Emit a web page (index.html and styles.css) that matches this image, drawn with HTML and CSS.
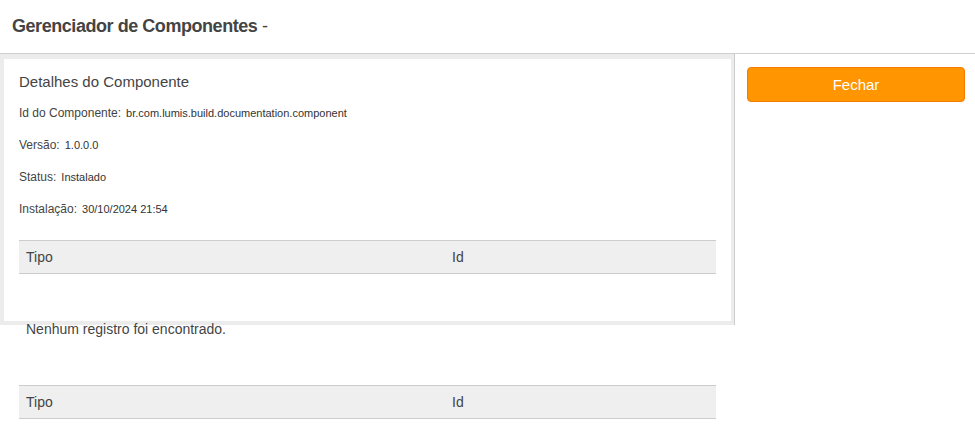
FILE: index.html
```html
<!DOCTYPE html>
<html lang="pt-BR">
<head>
  <meta charset="UTF-8">
  <title>Gerenciador de Componentes</title>
  <link rel="stylesheet" href="styles.css">
</head>
<body>
  <!-- cabeçalho -->
  <div class="header">
    <h1><strong>Gerenciador de Componentes</strong> -</h1>
  </div>

  <div class="main">
    <!-- coluna de detalhes -->
    <div class="content">
      <div class="panel">
        <div class="card">
          <h2>Detalhes do Componente</h2>
          <div class="field"><span class="label">Id do Componente:</span><span class="value">br.com.lumis.build.documentation.component</span></div>
          <div class="field"><span class="label">Versão:</span><span class="value">1.0.0.0</span></div>
          <div class="field"><span class="label">Status:</span><span class="value">Instalado</span></div>
          <div class="field"><span class="label">Instalação:</span><span class="value">30/10/2024 21:54</span></div>

          <table class="grid">
            <thead>
              <tr><th class="col-type">Tipo</th><th>Id</th></tr>
            </thead>
          </table>
          <p class="empty">Nenhum registro foi encontrado.</p>

          <table class="grid">
            <thead>
              <tr><th class="col-type">Tipo</th><th>Id</th></tr>
            </thead>
          </table>
        </div>
      </div>
    </div>

    <!-- coluna de ações -->
    <div class="actions">
      <button class="btn-close">Fechar</button>
    </div>
  </div>
</body>
</html>
```

FILE: styles.css
```css
/* reset */
* { box-sizing: border-box; margin: 0; padding: 0; }
html, body { min-height: 100%; }
body {
  font-family: 'Liberation Sans', Arial, sans-serif;
  background: #fff;
  color: #444;
  min-height: 100vh;
}

/* cabeçalho */
.header {
  height: 54px;
  border-bottom: 1px solid #cfcfcf;
  padding: 15px 12px 0;
}
.header h1 {
  font-size: 18px;
  font-weight: normal;
  line-height: 22px;
  color: #444;
  letter-spacing: -0.45px;
}
.header h1 strong { font-weight: bold; }

/* layout principal */
.main { display: flex; }
.content {
  width: 735px;
  height: 271px;
  border-right: 1px solid #ccc;
}
.panel {
  height: 100%;
  background: #ececec;
  padding: 5px 3px 4px 4px;
}
.card {
  height: 100%;
  background: #fff;
  padding: 14px 15px 0 15px;
}
.card h2 {
  font-size: 15px;
  font-weight: normal;
  line-height: 18px;
  color: #444;
  margin-bottom: 6px;
}
.field {
  height: 32px;
  line-height: 32px;
  font-size: 12px;
  color: #444;
}
.field .label { margin-right: 5px; }
.field .value { font-size: 11px; color: #333; }

/* tabelas */
.grid {
  width: 100%;
  border-collapse: collapse;
  margin-top: 15px;
}
.grid th {
  background: #efefef;
  border-top: 1px solid #ccc;
  border-bottom: 1px solid #ccc;
  height: 33px;
  padding: 0 7px;
  text-align: left;
  font-size: 14px;
  font-weight: normal;
  color: #444;
}
.grid .col-type { width: 426px; }
.empty {
  font-size: 14px;
  line-height: 20px;
  padding: 45px 7px 0;
  color: #444;
}
.empty + .grid { margin-top: 46px; }

/* ações */
.actions {
  flex: 1;
  padding: 13px 10px 0 12px;
}
.btn-close {
  width: 100%;
  height: 35px;
  background: #ff9500;
  border: 1px solid #f57c00;
  border-radius: 4px;
  color: #fff;
  font-family: inherit;
  font-size: 15px;
  cursor: pointer;
}
```
